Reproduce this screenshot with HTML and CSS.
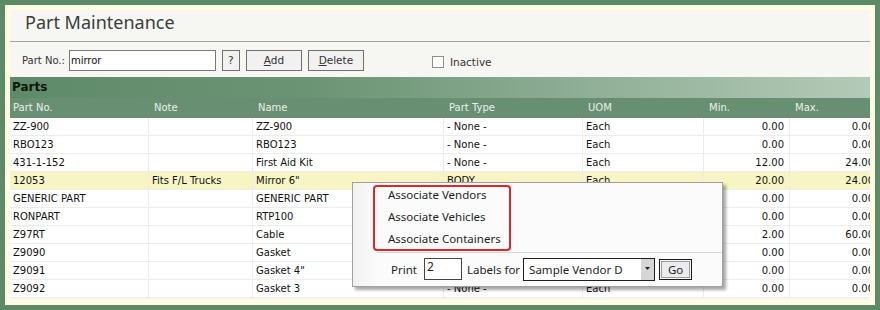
FILE: index.html
```html
<!DOCTYPE html>
<html lang="en">
<head>
  <meta charset="UTF-8">
  <title>Part Maintenance</title>
  <link rel="stylesheet" href="styles.css">
</head>
<body>
  <div class="frame">
    <div class="window">
      <div class="title">Part Maintenance</div>

      <div class="toolbar">
        <label class="field-label">Part No.:</label>
        <input class="part-input" type="text" value="mirror">
        <button class="btn btn-small">?</button>
        <button class="btn"><u>A</u>dd</button>
        <button class="btn"><u>D</u>elete</button>
        <span class="check-box"></span>
        <span class="check-label">Inactive</span>
      </div>

      <div class="band">Parts</div>

      <div class="grid">
        <div class="row head">
          <div class="cell first">Part No.</div>
          <div class="cell">Note</div>
          <div class="cell">Name</div>
          <div class="cell">Part Type</div>
          <div class="cell">UOM</div>
          <div class="cell">Min.</div>
          <div class="cell">Max.</div>
        </div>
        <div class="row">
          <div class="cell">ZZ-900</div><div class="cell"></div><div class="cell">ZZ-900</div>
          <div class="cell">- None -</div><div class="cell">Each</div>
          <div class="cell num">0.00</div><div class="cell num">0.00</div>
        </div>
        <div class="row">
          <div class="cell">RBO123</div><div class="cell"></div><div class="cell">RBO123</div>
          <div class="cell">- None -</div><div class="cell">Each</div>
          <div class="cell num">0.00</div><div class="cell num">0.00</div>
        </div>
        <div class="row">
          <div class="cell">431-1-152</div><div class="cell"></div><div class="cell">First Aid Kit</div>
          <div class="cell">- None -</div><div class="cell">Each</div>
          <div class="cell num">12.00</div><div class="cell num">24.00</div>
        </div>
        <div class="row selected">
          <div class="cell">12053</div><div class="cell">Fits F/L Trucks</div><div class="cell">Mirror 6"</div>
          <div class="cell">BODY</div><div class="cell">Each</div>
          <div class="cell num">20.00</div><div class="cell num">24.00</div>
        </div>
        <!-- part type / uom of the next rows sit under the menu -->
        <div class="row">
          <div class="cell">GENERIC PART</div><div class="cell"></div><div class="cell">GENERIC PART</div>
          <div class="cell"></div><div class="cell"></div>
          <div class="cell num">0.00</div><div class="cell num">0.00</div>
        </div>
        <div class="row">
          <div class="cell">RONPART</div><div class="cell"></div><div class="cell">RTP100</div>
          <div class="cell"></div><div class="cell"></div>
          <div class="cell num">0.00</div><div class="cell num">0.00</div>
        </div>
        <div class="row">
          <div class="cell">Z97RT</div><div class="cell"></div><div class="cell">Cable</div>
          <div class="cell"></div><div class="cell"></div>
          <div class="cell num">2.00</div><div class="cell num">60.00</div>
        </div>
        <div class="row">
          <div class="cell">Z9090</div><div class="cell"></div><div class="cell">Gasket</div>
          <div class="cell"></div><div class="cell"></div>
          <div class="cell num">0.00</div><div class="cell num">0.00</div>
        </div>
        <div class="row">
          <div class="cell">Z9091</div><div class="cell"></div><div class="cell">Gasket 4"</div>
          <div class="cell"></div><div class="cell"></div>
          <div class="cell num">0.00</div><div class="cell num">0.00</div>
        </div>
        <div class="row">
          <div class="cell">Z9092</div><div class="cell"></div><div class="cell">Gasket 3</div>
          <div class="cell">- None -</div><div class="cell">Each</div>
          <div class="cell num">0.00</div><div class="cell num">0.00</div>
        </div>
      </div>

      <!-- right-click menu over the grid -->
      <div class="menu">
        <div class="menu-item">Associate Vendors</div>
        <div class="menu-item">Associate Vehicles</div>
        <div class="menu-item">Associate Containers</div>
        <div class="menu-mark"></div>
        <div class="menu-sep"></div>
        <div class="menu-print">
          <span class="print-label">Print</span>
          <span class="count-box">2</span>
          <span class="labels-for">Labels for</span>
          <span class="vendor-select">
            <span class="vendor-text">Sample Vendor D</span>
            <span class="vendor-arrow">
              <svg width="7" height="4" viewBox="0 0 7 4"><path d="M1 0h5L3.5 3z" fill="#222"/></svg>
            </span>
          </span>
          <button class="go-btn">Go</button>
        </div>
      </div>
    </div>
  </div>
</body>
</html>
```

FILE: styles.css
```css
* {
  margin: 0;
  padding: 0;
  box-sizing: border-box;
}

body {
  background: #5e8a68;
  padding: 5px;
  font-family: 'DejaVu Sans', sans-serif;
  font-size: 10px;
  color: #111;
}

.frame {
  width: 870px;
  height: 300px;
  background: #fdfde2;
  padding: 5px;
}

.window {
  position: relative;
  width: 860px;
  height: 290px;
  overflow: hidden;
  background: #f6f6f2;
}

.title {
  height: 32px;
  padding-left: 15px;
  line-height: 25px;
  font-family: 'Noto Sans', sans-serif;
  font-size: 18px;
  color: #3c3c3c;
  border-bottom: 1px solid #a3a3a3;
}

.toolbar {
  height: 35px;
  display: flex;
  align-items: center;
  padding-left: 12px;
  padding-top: 1px;
}

.field-label {
  color: #333;
  margin-right: 4px;
}

.part-input {
  width: 147px;
  height: 21px;
  border: 1px solid #7a7a7a;
  background: #fff;
  font-family: 'DejaVu Sans', sans-serif;
  font-size: 10px;
  padding-left: 1px;
  color: #111;
  outline: none;
}

.btn {
  height: 21px;
  width: 56px;
  margin-left: 6px;
  border: 1px solid #707070;
  background: #f1f1f1;
  font-family: 'DejaVu Sans', sans-serif;
  font-size: 10.5px;
  color: #333;
}

.btn-small {
  width: 18px;
}

.check-box {
  width: 12px;
  height: 12px;
  margin-left: 68px;
  margin-top: 3px;
  border: 1px solid #8c8c8c;
  background: #fff;
}

.check-label {
  margin-left: 6px;
  margin-top: 3px;
  font-size: 10.5px;
  color: #333;
}

.band {
  height: 21px;
  padding-left: 2px;
  line-height: 21px;
  font-weight: bold;
  font-size: 12px;
  color: #0c160c;
  background: linear-gradient(to right, #5f8a69 0%, #6b9474 35%, #b4cab8 100%);
}

.grid {
  width: 867px;
}

.row {
  display: grid;
  grid-template-columns: 139px 104px 191px 139px 121px 86px 87px;
  height: 18px;
  background: #fff;
  border-bottom: 1px solid #ececec;
}

.row.selected {
  background: #f6f5c3;
}

.cell {
  padding: 0 3px;
  line-height: 17px;
  white-space: nowrap;
  overflow: hidden;
  border-right: 1px solid #ececec;
}

.cell.num {
  text-align: right;
  padding-right: 5px;
}

.cell.num:last-child {
  padding-right: 2px;
}

.row.head {
  height: 20px;
  background: #698f72;
  border-bottom: none;
}

.row.head .cell {
  padding-left: 5px;
  line-height: 20px;
  color: #e9f0ea;
  border-right: none;
}

.row.head .cell.first {
  padding-left: 3px;
}

.menu {
  position: absolute;
  left: 342px;
  top: 172px;
  width: 371px;
  height: 105px;
  padding-top: 1px;
  background: linear-gradient(to right, #f1f1f1 0, #fbfbfb 24px, #fbfbfb 24px);
  border: 1px solid #a0a0a0;
  box-shadow: 3px 3px 3px rgba(0, 0, 0, 0.35);
  font-family: 'Noto Sans', sans-serif;
  font-size: 11.5px;
  color: #1e1e1e;
}

.menu-item {
  height: 22px;
  line-height: 22px;
  padding-left: 35px;
}

.menu-mark {
  position: absolute;
  left: 20px;
  top: 2px;
  width: 138px;
  height: 66px;
  border: 2px solid #e2242b;
  border-radius: 4px;
}

.menu-sep {
  height: 1px;
  margin: 2px 0 0 24px;
  background: #d5d5d5;
}

.menu-print {
  display: flex;
  align-items: center;
  height: 32px;
  padding-left: 38px;
}

.count-box {
  width: 38px;
  height: 22px;
  margin-left: 7px;
  padding: 0 2px;
  line-height: 16px;
  background: #fff;
  border: 1px solid #444;
  font-size: 12px;
}

.labels-for {
  margin-left: 5px;
}

.vendor-select {
  display: flex;
  width: 132px;
  height: 23px;
  margin-left: 3px;
  background: #fff;
  border: 1px solid #1e1e1e;
}

.vendor-text {
  flex: 1;
  padding-left: 5px;
  line-height: 21px;
}

.vendor-arrow {
  width: 13px;
  display: flex;
  align-items: center;
  justify-content: center;
  background: #d6d6d6;
}

.go-btn {
  width: 33px;
  height: 21px;
  margin-left: 4px;
  border: 1px solid #1a1a1a;
  background: #ececec;
  box-shadow: inset 0 0 0 1px #f6f6f6, inset 0 0 0 2px #9c9c9c;
  font-family: 'Noto Sans', sans-serif;
  font-size: 11.5px;
  color: #1e1e1e;
}
```
